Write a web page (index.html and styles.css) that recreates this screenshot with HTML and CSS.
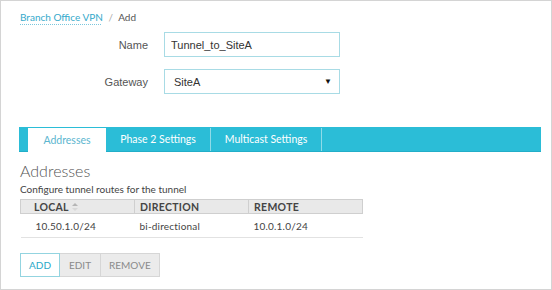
FILE: index.html
```html
<!DOCTYPE html>
<html lang="en">

<head>
    <meta charset="UTF-8">
    <meta name="viewport" content="width=device-width, initial-scale=1.0">
    <title>Branch Office VPN - Add</title>
    <link rel="stylesheet" href="styles.css">
</head>

<body>
    <div class="page">
        <!-- breadcrumb -->
        <div class="crumbs">
            <a href="#" class="crumb-link">Branch Office VPN</a>
            <span class="crumb-sep">/</span>
            <span class="crumb-current">Add</span>
        </div>

        <div class="form">
            <label class="form-label" for="name">Name</label>
            <input class="form-input" id="name" type="text" value="Tunnel_to_SiteA">

            <label class="form-label" for="gateway">Gateway</label>
            <div class="form-select" id="gateway">
                <span>SiteA</span>
                <span class="select-arrow">&#9660;</span>
            </div>
        </div>

        <div class="tabs">
            <div class="tab tab-addr active">Addresses</div>
            <div class="tab tab-phase">Phase 2 Settings</div>
            <div class="tab tab-multi">Multicast Settings</div>
        </div>

        <h2 class="section-title">Addresses</h2>
        <p class="section-desc">Configure tunnel routes for the tunnel</p>

        <table class="grid">
            <thead>
                <tr>
                    <th class="col-local">Local
                        <svg class="sort" width="6" height="8" viewBox="0 0 6 8">
                            <path d="M3 0 L6 3 L0 3 Z" fill="#b5b5b5" />
                            <path d="M0 5 L6 5 L3 8 Z" fill="#d8d8d8" />
                        </svg>
                    </th>
                    <th>Direction</th>
                    <th>Remote</th>
                </tr>
            </thead>
            <tbody>
                <tr>
                    <td class="col-local">10.50.1.0/24</td>
                    <td>bi-directional</td>
                    <td>10.0.1.0/24</td>
                </tr>
            </tbody>
        </table>

        <div class="buttons">
            <button class="btn btn-primary">Add</button>
            <button class="btn">Edit</button>
            <button class="btn">Remove</button>
        </div>
    </div>
</body>

</html>
```

FILE: styles.css
```css
html,
body {
    margin: 0;
    padding: 0;
    background: #fff;
}

.page {
    box-sizing: border-box;
    width: 552px;
    height: 290px;
    border: 1px solid #d4d4d4;
    padding: 0 10px 0 18px;
    font-family: Lato, "Open Sans", sans-serif;
    color: #444;
    overflow: hidden;
}

/* breadcrumb */
.crumbs {
    padding: 8px 0 0 1px;
    line-height: 16px;
    font-size: 10px;
}

.crumb-link {
    color: #35a9cb;
    text-decoration: underline dotted #7cc7dd;
    text-underline-offset: 3px;
}

.crumb-sep {
    color: #aaa;
    margin: 0 3px;
}

.crumb-current {
    color: #555;
}

/* form */
.form {
    display: grid;
    grid-template-columns: 128px 176px;
    column-gap: 16px;
    row-gap: 12px;
    align-items: center;
    margin: 7px 0 0 1px;
}

.form-label {
    text-align: right;
    font-family: "Liberation Sans", Arial, sans-serif;
    font-size: 11px;
    color: #555;
}

.form-input,
.form-select {
    box-sizing: border-box;
    width: 176px;
    height: 25px;
    margin: 0;
    border: 1px solid #a8dbe5;
    padding: 0 6px;
    font-family: "Liberation Sans", Arial, sans-serif;
    font-size: 11px;
    color: #333;
    background: #fff;
    outline: none;
}

.form-select {
    display: flex;
    align-items: center;
    justify-content: space-between;
    padding: 0 7px 0 9px;
}

.select-arrow {
    font-size: 8px;
    color: #111;
}

/* tabs */
.tabs {
    display: flex;
    height: 25px;
    margin-top: 33px;
    padding: 1px 0 0 9px;
    box-sizing: border-box;
    background: #2bbdd7;
    border-bottom: 1px solid #22aec8;
}

.tab {
    box-sizing: border-box;
    text-align: center;
    line-height: 23px;
    font-size: 10.5px;
    color: #fff;
    border-right: 1px solid #8fdbe8;
}

.tab-addr {
    width: 78px;
}

.tab-phase {
    width: 105px;
}

.tab-multi {
    width: 111px;
}

.tab.active {
    background: #fff;
    color: #5cb6cf;
    border-right: none;
    line-height: 24px;
    height: 24px;
}

/* addresses */
.section-title {
    margin: 9px 0 0 1px;
    font-size: 16px;
    font-weight: 300;
    line-height: 20px;
    color: #555;
}

.section-desc {
    margin: 1px 0 0 1px;
    font-size: 10px;
    line-height: 14px;
    color: #444;
}

.grid {
    margin: 3px 0 0 1px;
    width: 343px;
    border-collapse: collapse;
    font-size: 10px;
    font-variant-numeric: tabular-nums;
}

.grid th {
    box-sizing: border-box;
    width: 114px;
    height: 14px;
    padding: 0 5px;
    text-align: left;
    font-size: 10.5px;
    font-weight: bold;
    text-transform: uppercase;
    letter-spacing: .3px;
    color: #444;
    background: #e9e9e9;
    border: 1px solid #cfcfcf;
}

.grid td {
    height: 23px;
    padding: 0 5px;
    color: #444;
    letter-spacing: .2px;
    border-bottom: 1px solid #e2e2e2;
}

.grid .col-local {
    padding-left: 13px;
}

.grid td.col-local {
    padding-left: 15px;
}

.sort {
    margin-left: 1px;
    vertical-align: 0;
}

/* buttons */
.buttons {
    display: flex;
    margin: 15px 0 0 1px;
}

.btn {
    box-sizing: border-box;
    min-width: 41px;
    height: 24px;
    margin: 0;
    padding: 0 8px;
    font-family: Lato, "Open Sans", sans-serif;
    font-size: 10px;
    text-transform: uppercase;
    color: #8a8a8a;
    background: #ebebeb;
    border: 1px solid #d6d6d6;
    border-left: none;
}

.btn-primary {
    min-width: 40px;
    color: #2aa8c8;
    background: #fff;
    border: 1px solid #93d4e0;
}
```
